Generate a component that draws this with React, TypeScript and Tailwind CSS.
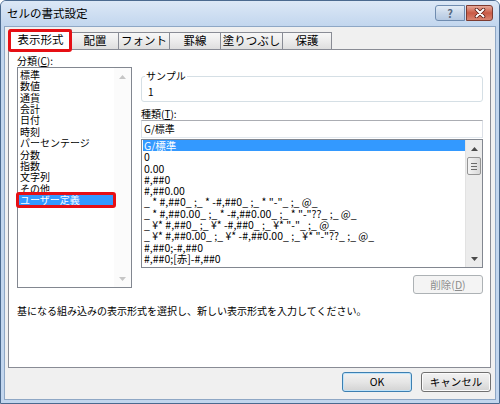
import React from "react";

const categories = [
  "標準",
  "数値",
  "通貨",
  "会計",
  "日付",
  "時刻",
  "パーセンテージ",
  "分数",
  "指数",
  "文字列",
  "その他",
  "ユーザー定義",
];

const formats = [
  "G/標準",
  "0",
  "0.00",
  "#,##0",
  "#,##0.00",
  '_ * #,##0_ ;_ * -#,##0_ ;_ * "-"_ ;_ @_',
  '_ * #,##0.00_ ;_ * -#,##0.00_ ;_ * "-"??_ ;_ @_',
  '_ ¥* #,##0_ ;_ ¥* -#,##0_ ;_ ¥* "-"_ ;_ @_',
  '_ ¥* #,##0.00_ ;_ ¥* -#,##0.00_ ;_ ¥* "-"??_ ;_ @_',
  "#,##0;-#,##0",
  "#,##0;[赤]-#,##0",
];

const tabs = [
  { label: "配置", w: "w-[47px]" },
  { label: "フォント", w: "w-[51px]" },
  { label: "罫線", w: "w-[51px]" },
  { label: "塗りつぶし", w: "w-[62px]" },
  { label: "保護", w: "w-[49px]" },
];

const Arrow = ({ up, color }: { up?: boolean; color: string }) => (
  <svg width="7" height="4" viewBox="0 0 7 4">
    <path d={up ? "M0 4 L3.5 0 L7 4Z" : "M0 0 L3.5 4 L7 0Z"} fill={color} />
  </svg>
);

const Button = ({ label, focused }: { label: string; focused?: boolean }) => (
  <div
    className={`w-[70px] h-[20px] flex items-center justify-center rounded-[3px] border text-[10.5px] bg-gradient-to-b from-[#f2f2f2] via-[#e6e6e6] to-[#d3d3d3] ${
      focused ? "border-[#3c7fb1] shadow-[inset_0_0_0_1px_#bfe3f9]" : "border-[#707070] shadow-[inset_0_0_0_1px_#fbfbfb]"
    }`}
  >
    {label}
  </div>
);

export default function App() {
  return (
    <div className="w-[500px] h-[404px] flex flex-col bg-[#c2d6ee] border border-[#4b6a8f] rounded-t-[6px] overflow-hidden text-black font-['Noto_Sans_CJK_JP',sans-serif]">
      {/* title bar */}
      <div className="h-[25px] flex items-start justify-between pl-[6px] pr-[6px] bg-gradient-to-b from-[#dce8f6] to-[#c2d6ee]">
        <div className="text-[11.5px] leading-[24px]">セルの書式設定</div>
        <div className="flex gap-[1px] pt-[4px]">
          <div className="w-[30px] h-[16px] rounded-l-[3px] border border-[#6f8cb0] bg-gradient-to-b from-[#e4edf7] via-[#c9d8ea] to-[#b5c9e2] flex items-center justify-center text-[11px] font-bold leading-none text-[#56677e]">
            ?
          </div>
          <div className="w-[27px] h-[16px] rounded-r-[3px] border border-[#7d3b30] bg-gradient-to-b from-[#e6a999] via-[#c95a45] to-[#d98470] flex items-center justify-center">
            <svg width="12" height="10" viewBox="0 0 12 10">
              <path d="M2.5 1.5 L9.5 8.5 M9.5 1.5 L2.5 8.5" stroke="#5a1d14" strokeWidth="3.6" strokeLinecap="round" />
              <path d="M2.5 1.5 L9.5 8.5 M9.5 1.5 L2.5 8.5" stroke="#ffffff" strokeWidth="2" strokeLinecap="round" />
            </svg>
          </div>
        </div>
      </div>

      {/* body */}
      <div className="flex-1 mx-[3px] mb-[3px] border border-[#8ea7c5] bg-[#f0f0f0] flex flex-col pl-[3px] pr-[4px] pt-[2px]">
        {/* tabs */}
        <div className="h-[20px] flex items-end pl-[1px]">
          <div className="relative z-10 w-[63px] h-[21px] -mb-px bg-white border-x border-t border-[#898c95] rounded-t-[2px] flex items-center justify-center text-[11.5px]">
            表示形式
            <div className="absolute -left-[2px] -right-[1px] -top-[1px] -bottom-[2px] border-[3px] border-[#e60f14] rounded-[3px]" />
          </div>
          {tabs.map(t => (
            <div
              key={t.label}
              className={`${t.w} h-[17px] border-t border-r border-[#898c95] bg-gradient-to-b from-[#f7f7f7] via-[#ececec] to-[#dedede] flex items-center justify-center text-[11.5px]`}
            >
              {t.label}
            </div>
          ))}
        </div>

        {/* panel */}
        <div className="h-[319px] bg-white border border-[#898c95] pl-[8px] pr-[7px] pt-[5px] text-[10px]">
          <div className="flex gap-[9px]">
            {/* left column */}
            <div className="w-[115px] flex flex-col">
              <div className="h-[12px] leading-[12px]">
                分類(<span className="underline">C</span>):
              </div>
              <div className="h-[221px] border border-[#828790] flex">
                <div className="flex-1 pt-[1px] pl-[1px] pr-[1px]">
                  {categories.map(c => (
                    <div
                      key={c}
                      className={`relative h-[11.36px] leading-[11.36px] pl-[1px] whitespace-pre ${
                        c === "ユーザー定義" ? "bg-[#3399ff] text-white" : ""
                      }`}
                    >
                      {c}
                      {c === "ユーザー定義" && (
                        <div className="absolute -left-[3px] -right-[3px] -top-[2px] -bottom-[3px] border-[3px] border-[#e60f14] rounded-[3px]" />
                      )}
                    </div>
                  ))}
                </div>
                <div className="w-[17px] flex flex-col justify-between bg-[#fbfbfb]">
                  <div className="h-[17px] flex items-center justify-center">
                    <Arrow up color="#c6c6c6" />
                  </div>
                  <div className="h-[17px] flex items-center justify-center">
                    <Arrow color="#c6c6c6" />
                  </div>
                </div>
              </div>
            </div>

            {/* right column */}
            <div className="flex-1 flex flex-col">
              <div className="relative mt-[21px] h-[26px] border border-[#d5dfe5] rounded-[3px] pl-[6px] pt-[9px] leading-[12px]">
                <div className="absolute -top-[7px] left-[3px] bg-white px-[1px] leading-[12px]">サンプル</div>
                1
              </div>
              <div className="mt-[6px] h-[12px] leading-[12px]">
                種類(<span className="underline">T</span>):
              </div>
              <div className="h-[18px] border border-[#abadb3] border-x-[#dbdfe6] border-b-[#e3e9ef] pl-[2px] leading-[16px]">
                G/標準
              </div>
              <div className="mt-[1px] h-[129px] border border-[#828790] flex">
                <div className="flex-1 pl-[1px] text-[10.5px]">
                  {formats.map((f, i) => (
                    <div
                      key={f}
                      className={`h-[11.3px] leading-[11.3px] pl-[1px] whitespace-pre ${
                        i === 0 ? "bg-[#3399ff] text-white" : ""
                      }`}
                    >
                      {f}
                    </div>
                  ))}
                </div>
                <div className="w-[17px] flex flex-col bg-[#ececec] border-l border-[#e2e2e2]">
                  <div className="h-[17px] flex items-center justify-center">
                    <Arrow up color="#4a4a4a" />
                  </div>
                  <div className="mx-[1px] h-[18px] rounded-[2px] border border-[#959595] bg-gradient-to-r from-[#f4f4f4] to-[#d9d9d9] flex flex-col items-center justify-center gap-[2px]">
                    <div className="w-[6px] h-px bg-[#6a6a6a]" />
                    <div className="w-[6px] h-px bg-[#6a6a6a]" />
                    <div className="w-[6px] h-px bg-[#6a6a6a]" />
                  </div>
                  <div className="flex-1" />
                  <div className="h-[17px] flex items-center justify-center">
                    <Arrow color="#4a4a4a" />
                  </div>
                </div>
              </div>
              <div className="mt-[7px] self-end w-[70px] h-[19px] rounded-[3px] border border-[#adb2b5] bg-[#f4f4f4] flex items-center justify-center text-[10.5px] text-[#8d8d8d]">
                削除(<span className="underline">D</span>)
              </div>
            </div>
          </div>
          <div className="mt-[11px] leading-[12px] whitespace-pre">
            基になる組み込みの表示形式を選択し、新しい表示形式を入力してください。
          </div>
        </div>

        {/* buttons */}
        <div className="mt-[4px] flex justify-end gap-[9px]">
          <Button label="OK" focused />
          <Button label="キャンセル" />
        </div>
      </div>
    </div>
  );
}
